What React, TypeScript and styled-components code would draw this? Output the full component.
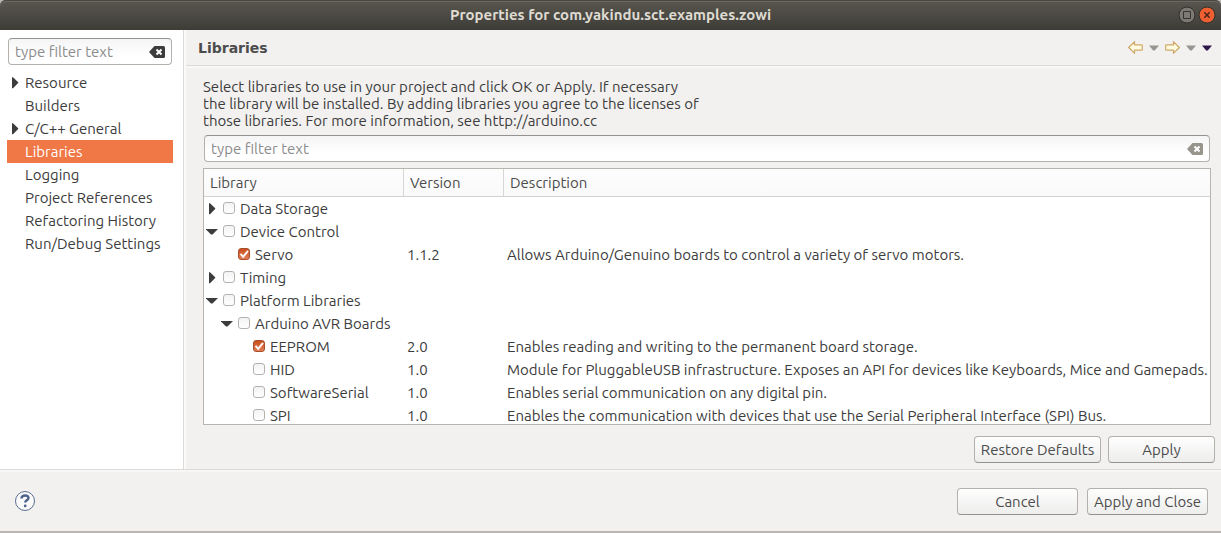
import React, { useState } from 'react';
import styled, { createGlobalStyle, css } from 'styled-components';

const GlobalStyle = createGlobalStyle`
  *, *::before, *::after { box-sizing: border-box; }
  body { margin: 0; background: #b9b6b3; }
  body, button, input { font-family: Ubuntu, "Noto Sans", sans-serif; font-size: 15px; color: #3c3c3c; }
`;

const Window = styled.div`
  display: flex;
  flex-direction: column;
  height: 100vh;
  padding-bottom: 2px;
`;

const TitleBar = styled.header`
  display: grid;
  grid-template-columns: 1fr auto 1fr;
  align-items: center;
  flex: none;
  height: 30px;
  padding: 0 5px;
  border-radius: 6px 6px 0 0;
  background: linear-gradient(#59574f, #3d3c37);
  box-shadow: inset 0 1px #4a4842, inset 0 2px #6a685f;
`;

const WindowTitle = styled.h1`
  grid-column: 2;
  margin: 0;
  font-size: 15px;
  font-weight: 700;
  line-height: 20px;
  color: #dfdbd2;
`;

const WindowControls = styled.div`
  display: flex;
  justify-content: flex-end;
  gap: 2px;
`;

const PlainButton = styled.button`
  display: flex;
  align-items: center;
  justify-content: center;
  flex: none;
  padding: 0;
  border: 0;
  background: none;
  svg { display: block; }
`;

const Body = styled.div`
  display: flex;
  flex: 1;
  min-height: 0;
  background: #f2f1f0;
`;

const Sidebar = styled.nav`
  display: flex;
  flex-direction: column;
  gap: 6px;
  flex: none;
  width: 184px;
  padding: 8px 10px 0 7px;
  background: #fff;
  border-right: 1px solid #dcdad8;
`;

const SearchBox = styled.div`
  display: flex;
  align-items: center;
  flex: none;
  height: 27px;
  margin: 0 1px;
  padding: 0 6px;
  border: 1px solid #b4b1ac;
  border-top-color: #95928d;
  border-radius: 4px;
  background: linear-gradient(#f5f5f5, #fff 70%);
`;

const SearchInput = styled.input`
  flex: 1;
  min-width: 0;
  height: 25px;
  padding: 0;
  border: 0;
  outline: 0;
  background: none;
  line-height: 20px;
  &::placeholder { color: #8c8c8c; opacity: 1; }
`;

const CategoryList = styled.ul`
  margin: 0;
  padding: 0;
  list-style: none;
`;

const CategoryRow = styled.li<{ $selected: boolean }>`
  display: flex;
  align-items: center;
  height: 23px;
  padding-left: 2px;
  background: ${p => (p.$selected ? '#f07746' : 'transparent')};
  a { color: ${p => (p.$selected ? '#fff' : '#3c3c3c')}; text-decoration: none; line-height: 20px; white-space: nowrap; }
`;

const ArrowSlot = styled.span<{ $width: number }>`
  display: flex;
  flex: none;
  width: ${p => p.$width}px;
`;

const Main = styled.main`
  display: flex;
  flex-direction: column;
  flex: 1;
  min-width: 0;
  border-left: 2px solid #fafafa;
`;

const PageHeader = styled.div`
  display: flex;
  align-items: center;
  justify-content: space-between;
  flex: none;
  height: 36px;
  padding: 0 9px 0 12px;
  border-bottom: 1px solid #dcdad8;
  box-shadow: 0 2px #f8f7f6;
`;

const PageTitle = styled.h2`
  margin: 0;
  font-family: "DejaVu Sans", sans-serif;
  font-size: 14px;
  line-height: 20px;
  color: #4c4c4c;
`;

const HistoryBar = styled.div`
  display: flex;
  align-items: center;
  gap: 6px;
`;

const Content = styled.section`
  display: flex;
  flex-direction: column;
  flex: 1;
  min-height: 0;
  padding: 12px 10px 11px 17px;
`;

const Intro = styled.p`
  max-width: 520px;
  margin: 0 0 6px;
  line-height: 17px;
  white-space: pre-line;
`;

const TableFrame = styled.div`
  flex: 1;
  min-height: 0;
  margin-top: 6px;
  overflow: hidden;
  border: 1px solid #b8b5b1;
  background: #fff;
`;

const LibraryTable = styled.table`
  width: 100%;
  table-layout: fixed;
  border-collapse: separate;
  border-spacing: 0;
`;

const HeadCell = styled.th<{ $width?: number }>`
  ${p => p.$width && css`width: ${p.$width}px;`}
  height: 28px;
  padding: 0 6px;
  border-bottom: 1px solid #d5d3d0;
  border-right: ${p => (p.$width ? '1px solid #d9d7d5' : '0')};
  background: linear-gradient(#fdfdfd, #f9f9f9);
  font-weight: 400;
  line-height: 20px;
  color: #4c4c4c;
  text-align: left;
`;

const Cell = styled.td`
  height: 23px;
  padding: 0 0 0 3px;
  line-height: 20px;
  white-space: nowrap;
  &:first-child { padding-left: 2px; }
`;

const TreeItem = styled.div<{ $depth: number }>`
  display: flex;
  align-items: center;
  padding-left: ${p => p.$depth * 15}px;
`;

const TickBox = styled.span`
  position: relative;
  display: flex;
  flex: none;
  width: 12px;
  height: 12px;
  margin: 0 5px 2px 3px;
  svg { position: absolute; inset: 0; pointer-events: none; }
`;

const Tick = styled.input`
  appearance: none;
  width: 12px;
  height: 12px;
  margin: 0;
  border: 1px solid #b5b2ae;
  border-radius: 3px;
  background: linear-gradient(#f3f3f3, #fff);
  &:checked { border-color: #a84e2b; background: linear-gradient(#c9501f, #e27e57); }
`;

const ActionRow = styled.div`
  display: flex;
  justify-content: flex-end;
  flex: none;
  gap: 7px;
  padding: 0 6px 6px;
`;

const Footer = styled.footer`
  display: flex;
  align-items: center;
  flex: none;
  gap: 9px;
  height: 62px;
  padding: 2px 13px 0 14px;
  border-top: 1px solid #dcdad8;
  background: #f2f1f0;
  box-shadow: inset 0 2px #f8f7f6;
`;

const Spacer = styled.span`
  flex: 1;
`;

const Button = styled.button<{ $width: number }>`
  min-width: ${p => p.$width}px;
  height: 27px;
  padding: 0 4px;
  border: 1px solid #b4b1ac;
  border-bottom-color: #95928d;
  border-radius: 4px;
  background: linear-gradient(#fefefe, #ededec);
  line-height: 20px;
  color: #4c4c4c;
  white-space: nowrap;
`;

const Expander = ({ open }: { open: boolean }) => (
  <svg width="12" height="12" viewBox="0 0 12 12" fill="#3c3c3c" aria-hidden="true">
    {open ? <path d="M0 3h11.500v.6L6.500 8.500h-1.500L0 3.600z" /> : <path d="M3 .2h1L9.200 5.300v.8L4 11.200H3z" />}
  </svg>
);

const ClearIcon = ({ color }: { color: string }) => (
  <svg width="16" height="12" viewBox="0 0 16 12" aria-hidden="true">
    <path d="M5.500 0h9q1.500 0 1.500 1.500v9q0 1.500-1.500 1.500h-9L0 6z" fill={color} />
    <path d="M7.500 3.500l5 5m0-5l-5 5" stroke="#fff" strokeWidth="2" />
  </svg>
);

const HistoryArrow = ({ forward }: { forward?: boolean }) => (
  <svg width="15" height="13" viewBox="0 0 15 13" aria-hidden="true">
    <path
      d="M.7 6.500L6.500.8v3h7q.8 0 .8.800v3.800q0 .8-.8.800h-7v3z"
      fill="#fffbe3"
      stroke="#cfa968"
      strokeWidth="1.200"
      transform={forward ? 'matrix(-1 0 0 1 15 0)' : undefined}
    />
  </svg>
);

const MenuArrow = ({ dark }: { dark?: boolean }) => (
  <svg width="10" height="6" viewBox="0 0 10 6" aria-hidden="true">
    <path d="M0 .5h10L5.800 5.500H4.200z" fill={dark ? '#2b1847' : '#979590'} />
  </svg>
);

const SearchField = ({ label, clearColor }: { label: string; clearColor: string }) => {
  const [text, setText] = useState('');
  return (
    <SearchBox>
      <SearchInput aria-label={label} placeholder="type filter text" value={text} onChange={e => setText(e.target.value)} />
      <PlainButton type="button" aria-label="Clear" onClick={() => setText('')}>
        <ClearIcon color={clearColor} />
      </PlainButton>
    </SearchBox>
  );
};

const categories = [
  { name: 'Resource', parent: true },
  { name: 'Builders' },
  { name: 'C/C++ General', parent: true },
  { name: 'Libraries' },
  { name: 'Logging' },
  { name: 'Project References' },
  { name: 'Refactoring History' },
  { name: 'Run/Debug Settings' },
];

type Library = { name: string; depth: number; open?: boolean; checked?: boolean; version?: string; description?: string };

const libraries: Library[] = [
  { name: 'Data Storage', depth: 0, open: false },
  { name: 'Device Control', depth: 0, open: true },
  { name: 'Servo', depth: 1, checked: true, version: '1.1.2', description: 'Allows Arduino/Genuino boards to control a variety of servo motors.' },
  { name: 'Timing', depth: 0, open: false },
  { name: 'Platform Libraries', depth: 0, open: true },
  { name: 'Arduino AVR Boards', depth: 1, open: true },
  { name: 'EEPROM', depth: 2, checked: true, version: '2.0', description: 'Enables reading and writing to the permanent board storage.' },
  { name: 'HID', depth: 2, version: '1.0', description: 'Module for PluggableUSB infrastructure. Exposes an API for devices like Keyboards, Mice and Gamepads.' },
  { name: 'SoftwareSerial', depth: 2, version: '1.0', description: 'Enables serial communication on any digital pin.' },
  { name: 'SPI', depth: 2, version: '1.0', description: 'Enables the communication with devices that use the Serial Peripheral Interface (SPI) Bus.' },
];

const LibraryRow = ({ item }: { item: Library }) => {
  const [checked, setChecked] = useState(!!item.checked);
  const id = item.name.toLowerCase().replace(/ /g, '-');
  return (
    <tr>
      <Cell>
        <TreeItem $depth={item.depth}>
          <ArrowSlot $width={14}>{item.open !== undefined && <Expander open={item.open} />}</ArrowSlot>
          <TickBox>
            <Tick type="checkbox" id={id} checked={checked} onChange={e => setChecked(e.target.checked)} />
            {checked && (
              <svg width="12" height="12" viewBox="0 0 12 12" aria-hidden="true">
                <path d="M2.500 5.800l2.700 3L10 2.800" fill="none" stroke="#fff" strokeWidth="1.900" />
              </svg>
            )}
          </TickBox>
          <label htmlFor={id}>{item.name}</label>
        </TreeItem>
      </Cell>
      <Cell>{item.version}</Cell>
      <Cell>{item.description}</Cell>
    </tr>
  );
};

export default function App() {
  return (
    <Window>
      <GlobalStyle />
      <TitleBar>
        <WindowTitle>Properties for com.yakindu.sct.examples.zowi</WindowTitle>
        <WindowControls>
          <PlainButton type="button" aria-label="Maximize">
            <svg width="18" height="18" viewBox="0 0 18 18">
              <circle cx="9" cy="9" r="8" fill="#7b7971" stroke="#302f2b" />
              <path d="M5.500 5.500h7v7h-7z" fill="none" stroke="#353430" />
            </svg>
          </PlainButton>
          <PlainButton type="button" aria-label="Close window">
            <svg width="18" height="18" viewBox="0 0 18 18">
              <circle cx="9" cy="9" r="8" fill="#ee5f32" stroke="#302f2b" />
              <path d="M6.300 6.300l5.400 5.400m0-5.400l-5.400 5.400" stroke="#4a2417" strokeWidth="1.500" />
            </svg>
          </PlainButton>
        </WindowControls>
      </TitleBar>
      <Body>
        <Sidebar>
          <SearchField label="Filter pages" clearColor="#3c3c3c" />
          <CategoryList>
            {categories.map(c => (
              <CategoryRow key={c.name} $selected={c.name === 'Libraries'}>
                <ArrowSlot $width={16}>{c.parent && <Expander open={false} />}</ArrowSlot>
                <a href="#page">{c.name}</a>
              </CategoryRow>
            ))}
          </CategoryList>
        </Sidebar>
        <Main>
          <PageHeader>
            <PageTitle>Libraries</PageTitle>
            <HistoryBar>
              <PlainButton type="button" aria-label="Back"><HistoryArrow /></PlainButton>
              <PlainButton type="button" aria-label="Back history"><MenuArrow /></PlainButton>
              <PlainButton type="button" aria-label="Forward"><HistoryArrow forward /></PlainButton>
              <PlainButton type="button" aria-label="Forward history"><MenuArrow /></PlainButton>
              <PlainButton type="button" aria-label="View menu"><MenuArrow dark /></PlainButton>
            </HistoryBar>
          </PageHeader>
          <Content>
            <Intro>
              {'Select libraries to use in your project and click OK or Apply. If necessary\nthe library will be installed. By adding libraries you agree to the licenses of\nthose libraries. For more information, see http://arduino.cc'}
            </Intro>
            <SearchField label="Filter libraries" clearColor="#97948e" />
            <TableFrame>
              <LibraryTable>
                <thead>
                  <tr>
                    <HeadCell $width={200}>Library</HeadCell>
                    <HeadCell $width={100}>Version</HeadCell>
                    <HeadCell>Description</HeadCell>
                  </tr>
                </thead>
                <tbody>
                  {libraries.map(item => <LibraryRow key={item.name} item={item} />)}
                </tbody>
              </LibraryTable>
            </TableFrame>
          </Content>
          <ActionRow>
            <Button type="button" $width={127}>Restore Defaults</Button>
            <Button type="button" $width={107}>Apply</Button>
          </ActionRow>
        </Main>
      </Body>
      <Footer>
        <PlainButton type="button" aria-label="Help">
          <svg width="22" height="22" viewBox="0 0 22 22">
            <circle cx="11" cy="10" r="9.500" fill="#fafafa" stroke="#5b6f94" />
            <path d="M7.500 7.400C7.500 5.500 9 4.500 11 4.500s3.500 1 3.500 2.600c0 2.200-3.300 2.300-3.300 4.400" fill="none" stroke="#4d628c" strokeWidth="2.400" />
            <circle cx="11.200" cy="14.900" r="1.400" fill="#4d628c" />
          </svg>
        </PlainButton>
        <Spacer />
        <Button type="button" $width={121}>Cancel</Button>
        <Button type="button" $width={121}>Apply and Close</Button>
      </Footer>
    </Window>
  );
}
